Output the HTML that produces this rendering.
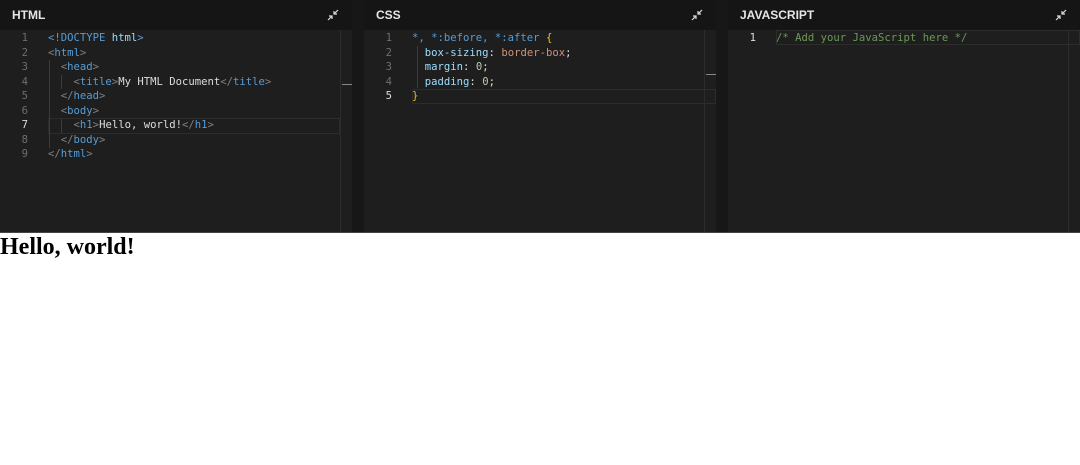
<!DOCTYPE html>
<html><head><style>
body{margin:0;width:1080px;height:465px;background:#fff;overflow:hidden;position:relative}
.wrap{position:absolute;left:0;top:0;width:1080px;height:232px;background:#171717;border-bottom:1px solid #444}
.p{position:absolute;top:0;width:352px;height:232px;background:#1e1e1e}
.h{height:30px;background:#151515;color:#e6e6e6;font:bold 12px "Liberation Sans",sans-serif;line-height:31px;padding-left:12px;position:relative}
.ic{position:absolute;right:13px;top:9px}
.ed{position:relative;font:10.6px/14.5px "DejaVu Sans Mono","Liberation Mono",monospace;color:#ddd;padding-top:1px}
.ln{position:absolute;left:0;width:28px;text-align:right;color:#6e6e6e}
.l{height:14.5px;white-space:pre;position:relative}
.sb{position:absolute;left:340px;top:30px;width:1px;height:202px;background:#2c2c2c}
.t{color:#569cd6}.g{color:#808080}.o{color:#ce9178}.y{color:#e8c02a}.c{color:#6a9955}.pl{color:#9cdcfe}.n{color:#b5cea8}
.code{position:absolute;left:48px;top:1px}
.guide{position:absolute;width:1px;background:#3a3a3a}
</style></head><body>
<div class="wrap">
<div class="p" style="left:0">
 <div class="h">HTML<svg class="ic" width="12" height="12" viewBox="0 0 12 12"><path d="M11 1 7 5M7 2v3h3M1 11l4-4M2 7h3v3" stroke="#ddd" stroke-width="1.2" fill="none"/></svg></div>
 <div class="ed">
  <div class="ln"><div class="l">1</div><div class="l">2</div><div class="l">3</div><div class="l">4</div><div class="l">5</div><div class="l">6</div><div class="l" style="color:#ddd">7</div><div class="l">8</div><div class="l">9</div></div>
  <div style="position:absolute;left:48px;right:12px;top:88px;height:14px;border:1px solid #2c2c2c"></div>
  <div class="guide" style="top:30px;height:88px;left:49px"></div>
  <div class="guide" style="left:61px;top:45px;height:14px"></div>
  <div class="guide" style="left:61px;top:89px;height:14px"></div>
  <div class="code">
   <div class="l"><span class="t">&lt;!DOCTYPE <b style="font-weight:normal;color:#9cdcfe">html</b>&gt;</span></div>
   <div class="l"><span class="g">&lt;</span><span class="t">html</span><span class="g">&gt;</span></div>
   <div class="l">  <span class="g">&lt;</span><span class="t">head</span><span class="g">&gt;</span></div>
   <div class="l">    <span class="g">&lt;</span><span class="t">title</span><span class="g">&gt;</span>My HTML Document<span class="g">&lt;/</span><span class="t">title</span><span class="g">&gt;</span></div>
   <div class="l">  <span class="g">&lt;/</span><span class="t">head</span><span class="g">&gt;</span></div>
   <div class="l">  <span class="g">&lt;</span><span class="t">body</span><span class="g">&gt;</span></div>
   <div class="l">    <span class="g">&lt;</span><span class="t">h1</span><span class="g">&gt;</span>Hello, world!<span class="g">&lt;/</span><span class="t">h1</span><span class="g">&gt;</span></div>
   <div class="l">  <span class="g">&lt;/</span><span class="t">body</span><span class="g">&gt;</span></div>
   <div class="l"><span class="g">&lt;/</span><span class="t">html</span><span class="g">&gt;</span></div>
  </div>
 </div>
 <div class="sb"></div><div style="position:absolute;left:342px;top:84px;width:10px;height:1px;background:#888"></div>
</div>
<div class="p" style="left:364px">
 <div class="h">CSS<svg class="ic" width="12" height="12" viewBox="0 0 12 12"><path d="M11 1 7 5M7 2v3h3M1 11l4-4M2 7h3v3" stroke="#ddd" stroke-width="1.2" fill="none"/></svg></div>
 <div class="ed">
  <div class="ln"><div class="l">1</div><div class="l">2</div><div class="l">3</div><div class="l">4</div><div class="l" style="color:#ddd">5</div></div>
  <div style="position:absolute;left:48px;right:0;top:59px;height:13px;border:1px solid #2c2c2c"></div>
  <div class="guide" style="left:53px;top:16px;height:42px"></div>
  <div class="code">
   <div class="l"><span class="t">*, *:before, *:after </span><span class="y">{</span></div>
   <div class="l">  <span class="pl">box-sizing</span>: <span class="o">border-box</span>;</div>
   <div class="l">  <span class="pl">margin</span>: <span class="n">0</span>;</div>
   <div class="l">  <span class="pl">padding</span>: <span class="n">0</span>;</div>
   <div class="l"><span class="y">}</span></div>
  </div>
 </div>
 <div class="sb"></div><div style="position:absolute;left:342px;top:74px;width:10px;height:1px;background:#888"></div>
</div>
<div class="p" style="left:728px">
 <div class="h">JAVASCRIPT<svg class="ic" width="12" height="12" viewBox="0 0 12 12"><path d="M11 1 7 5M7 2v3h3M1 11l4-4M2 7h3v3" stroke="#ddd" stroke-width="1.2" fill="none"/></svg></div>
 <div class="ed">
  <div class="ln"><div class="l" style="color:#ddd">1</div></div>
  <div style="position:absolute;left:48px;right:0;top:0;height:13px;border:1px solid #2c2c2c"></div>
  <div class="code"><div class="l c">/* Add your JavaScript here */</div></div>
 </div>
 <div class="sb"></div>
</div>
</div>
<h1 style="position:absolute;left:0;top:233px;margin:0;font:bold 24px/28px 'Liberation Serif',serif;color:#000">Hello, world!</h1>
</body></html>
